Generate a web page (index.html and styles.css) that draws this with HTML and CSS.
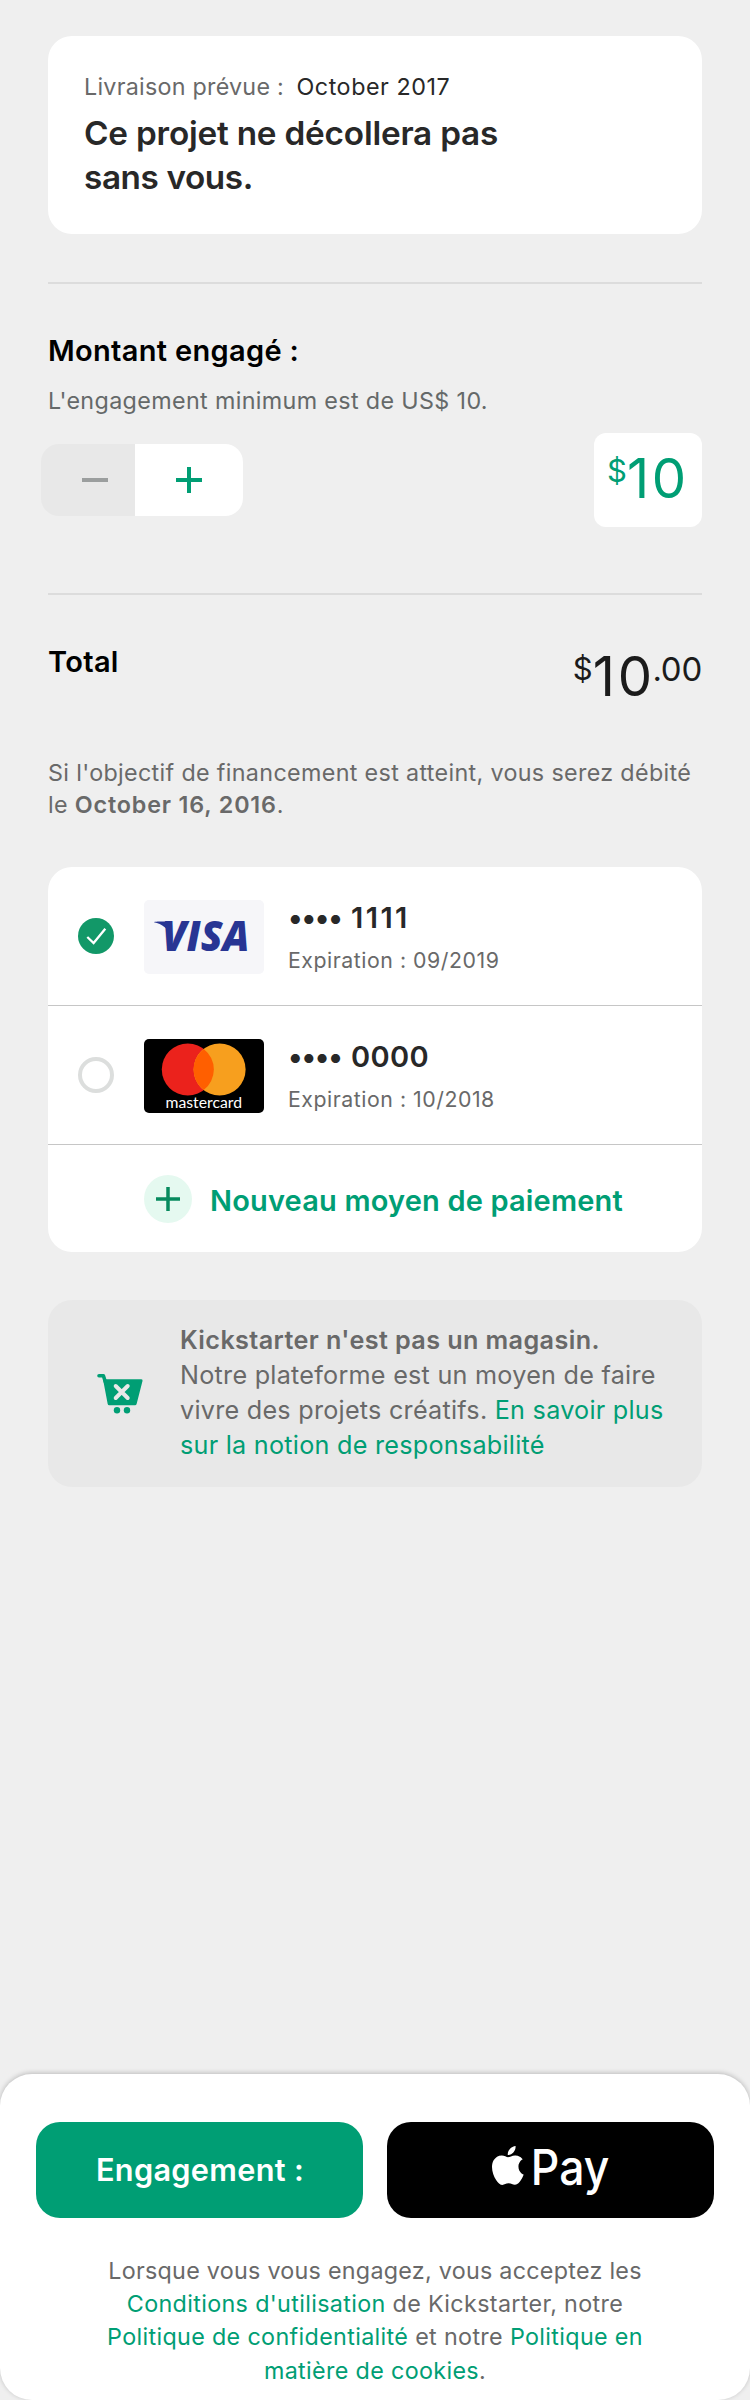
FILE: index.html
```html
<!DOCTYPE html>
<html lang="fr">
<head>
<meta charset="utf-8">
<title>Engagement</title>
<link rel="stylesheet" href="styles.css">
</head>
<body>
<main class="page">
  <div class="content">
    <section class="card reward">
      <p class="delivery"><span class="label">Livraison prévue :</span><span class="date">October 2017</span></p>
      <h1 class="reward-title">Ce projet ne décollera pas<br><span class="tight">sans vous.</span></h1>
    </section>

    <hr class="divider">

    <section class="pledge">
      <h2 class="heading">Montant engagé :</h2>
      <p class="minimum">L'engagement minimum est de US$ 10.</p>
      <div class="pledge-row">
        <div class="stepper">
          <button class="step minus" aria-label="Diminuer"><svg width="26" height="26" viewBox="0 0 26 26"><path d="M0 13H26" stroke="#9b9e9e" stroke-width="4"/></svg></button>
          <button class="step plus" aria-label="Augmenter"><svg width="26" height="26" viewBox="0 0 26 26"><path d="M0 13H26M13 0V26" stroke="#009e74" stroke-width="4"/></svg></button>
        </div>
        <div class="amount"><span class="currency">$</span><span class="units">10</span></div>
      </div>
    </section>

    <hr class="divider after-pledge">

    <section class="total">
      <h2 class="heading">Total</h2>
      <div class="price"><span class="currency">$</span><span class="units">10</span><span class="cents">.00</span></div>
    </section>

    <p class="notice">Si l'objectif de financement est atteint, vous serez débité<br>le <b>October 16, 2016</b>.</p>

    <section class="card methods">
      <div class="method">
        <svg class="radio" width="36" height="36" viewBox="0 0 36 36"><circle cx="18" cy="18" r="18" fill="#129868"/><path d="M9.3 19L15.6 25L27.3 10.8" fill="none" stroke="#fff" stroke-width="2.3"/></svg>
        <svg class="brand" width="120" height="74" viewBox="0 0 120 74">
          <rect width="120" height="74" rx="5" fill="#f6f6f9"/>
          <path d="M10 22.3C10 21.5 17 21.4 23.5 21.6L28.5 38C24.5 28.5 18 24 10 22.3Z" fill="#283593"/>
          <text class="visa" x="18" y="51.4" textLength="87.5" lengthAdjust="spacingAndGlyphs">VISA</text>
        </svg>
        <div class="details">
          <p class="number"><span class="dots">••••</span><span class="ones">1111</span></p>
          <p class="expiry">Expiration : 09/2019</p>
        </div>
      </div>
      <div class="method">
        <svg class="radio" width="36" height="36" viewBox="0 0 36 36"><circle cx="18" cy="18" r="16" fill="#fff" stroke="#dcdedd" stroke-width="4"/></svg>
        <svg class="brand" width="120" height="74" viewBox="0 0 120 74">
          <rect width="120" height="74" rx="5" fill="#000"/>
          <circle cx="43.8" cy="30.5" r="26" fill="#eb221c"/>
          <circle cx="75.6" cy="30.5" r="26" fill="#f79f1e"/>
          <path d="M59.7 9.9A26 26 0 0 1 59.7 51.1A26 26 0 0 1 59.7 9.9Z" fill="#ff5f00"/>
          <text class="mastercard" x="21.5" y="69.4" textLength="76.5" lengthAdjust="spacingAndGlyphs">mastercard</text>
        </svg>
        <div class="details">
          <p class="number"><span class="dots">••••</span><span>0000</span></p>
          <p class="expiry">Expiration : 10/2018</p>
        </div>
      </div>
      <a class="add">
        <svg width="48" height="48" viewBox="0 0 48 48"><circle cx="24" cy="24" r="24" fill="#e5f9f0"/><path d="M12 24H36M24 12V36" stroke="#078a5e" stroke-width="3.5"/></svg>
        <span class="add-label">Nouveau moyen de paiement</span>
      </a>
    </section>

    <section class="info">
      <svg class="cart" width="46" height="41" viewBox="0 0 46 41">
        <path d="M2 2.8H6.4L8.4 9" fill="none" stroke="#009e74" stroke-width="3.6" stroke-linecap="round" stroke-linejoin="round"/>
        <path d="M6 6.3H44.3Q46 6.3 45.5 8L39.6 31Q39.2 32.2 38 32.2H12.2Q11 32.2 10.7 31Z" fill="#009e74"/>
        <path d="M18.7 13L30.7 25M30.7 13L18.7 25" stroke="#e8e8e8" stroke-width="4" stroke-linecap="round"/>
        <circle cx="20" cy="37.3" r="3.2" fill="#009e74"/><circle cx="30" cy="37.3" r="3.2" fill="#009e74"/>
      </svg>
      <p class="info-text"><b>Kickstarter n'est pas un magasin.</b><br>Notre plateforme est un moyen de faire<br>vivre des projets créatifs. <a>En savoir plus<br>sur la notion de responsabilité</a></p>
    </section>
  </div>

  <footer class="footer">
    <div class="actions">
      <button class="btn pledge-btn">Engagement :</button>
      <button class="btn apple-btn">
        <svg width="141" height="72" viewBox="0 0 141 72">
          <path transform="translate(8.4 12) scale(1.62)" fill="#fff" d="M12.152 6.896c-.948 0-2.415-1.078-3.96-1.04-2.04.027-3.91 1.183-4.961 3.014-2.117 3.675-.546 9.103 1.519 12.09 1.013 1.454 2.208 3.09 3.792 3.039 1.52-.065 2.09-.987 3.935-.987 1.831 0 2.35.987 3.96.948 1.637-.026 2.676-1.48 3.676-2.948 1.156-1.688 1.636-3.325 1.662-3.415-.039-.013-3.182-1.221-3.22-4.857-.026-3.04 2.48-4.494 2.597-4.559-1.429-2.09-3.623-2.324-4.39-2.376-2-.156-3.675 1.09-4.61 1.09zM15.53 3.83c.843-1.012 1.4-2.427 1.245-3.83-1.207.052-2.662.805-3.532 1.818-.78.896-1.454 2.338-1.273 3.714 1.338.104 2.715-.688 3.559-1.701"/>
          <text class="pay" x="50.8" y="50.6" textLength="78.5" lengthAdjust="spacingAndGlyphs">Pay</text>
        </svg>
      </button>
    </div>
    <p class="legal"><span class="first">Lorsque vous vous engagez, vous acceptez les</span><br><a>Conditions d'utilisation</a> de Kickstarter, notre<br><a>Politique de confidentialité</a> et notre <a>Politique en<br>matière de cookies</a>.</p>
  </footer>
</main>
</body>
</html>
```
FILE: styles.css
```css
* { box-sizing: border-box; }
body, p, h1, h2, hr { margin: 0; }
body {
  background: #efefef;
  font-family: Inter, "Liberation Sans", sans-serif;
  color: #282828;
}
svg { display: block; flex: none; }
button { border: 0; padding: 0; font-family: inherit; }
b { font-weight: 600; }
a { color: #009e74; }

.page {
  display: flex;
  flex-direction: column;
  width: 750px;
  height: 2400px;
}
.content { padding: 36px 48px 0; }
.card { background: #fff; border-radius: 24px; }

.reward { height: 198px; padding: 36px; }
.delivery { font-size: 23.3px; line-height: 29px; letter-spacing: .25px; }
.delivery .label { color: #696969; }
.delivery .date { margin-left: 12.5px; letter-spacing: .54px; }
.reward-title {
  margin-top: 10px;
  font-size: 33.3px;
  font-weight: 600;
  line-height: 44px;
  letter-spacing: -.2px;
}
.tight { letter-spacing: -.4px; }

.divider { height: 2px; margin: 48px 0; border: 0; background: #dcdcdc; }
.heading {
  padding-top: 1px;
  font-size: 29px;
  font-weight: 600;
  line-height: 36px;
  letter-spacing: .32px;
  color: #000;
}
.minimum {
  margin-top: 17px;
  font-size: 23.3px;
  line-height: 30px;
  letter-spacing: .36px;
  color: #656969;
}
.pledge-row {
  display: flex;
  align-items: center;
  justify-content: space-between;
  margin-top: 17px;
}
.stepper {
  display: flex;
  height: 72px;
  margin-left: -7px;
  border-radius: 18px;
  overflow: hidden;
}
.step { display: flex; align-items: center; }
.minus { width: 94px; padding-left: 41px; background: #e8e8e8; }
.plus { width: 108px; padding-left: 41px; background: #fff; }

.amount, .price { display: flex; align-items: flex-start; }
.amount {
  width: 108px;
  height: 94px;
  padding: 15px 0 0 13px;
  border-radius: 12px;
  background: #fff;
  color: #009e74;
}
.currency { margin-top: 3px; font-size: 31px; line-height: 40px; }
.units { font-size: 54.5px; line-height: 60px; letter-spacing: 2.8px; }
.cents { margin: 3px 0 0 -2.5px; font-size: 33px; line-height: 40px; letter-spacing: -.24px; }

.after-pledge { margin-top: 66px; }
.total { display: flex; justify-content: space-between; height: 63px; }
.price { margin-top: 3px; color: #1b1b1b; }

.notice {
  margin: 51px 0 46px;
  font-size: 23.3px;
  line-height: 32px;
  letter-spacing: .34px;
  color: #696969;
}
.notice b { letter-spacing: .84px; }

.methods { height: 385px; }
.method {
  display: flex;
  height: 139px;
  padding-left: 30px;
  border-bottom: 1px solid #c6c6c6;
}
.radio { margin-top: 51px; }
.brand { margin: 33px 24px 0 30px; }
.visa {
  font-family: "Open Sans", sans-serif;
  font-size: 42px;
  font-weight: 800;
  font-style: italic;
  fill: #283593;
}
.mastercard { font-family: Lato, sans-serif; font-size: 14.5px; fill: #fff; }
.details { padding-top: 33px; }
.number { display: flex; font-size: 29px; font-weight: 600; line-height: 36px; letter-spacing: .37px; }
.dots { margin-right: 9.5px; letter-spacing: -1.2px; }
.ones { letter-spacing: 2.4px; }
.expiry { margin-top: 10px; font-size: 21.3px; line-height: 28px; letter-spacing: .53px; color: #696969; }
.add { display: flex; align-items: center; gap: 18px; height: 107px; padding-left: 96px; }
.add-label { margin-top: 4px; font-size: 29px; font-weight: 600; line-height: 36px; letter-spacing: .17px; }

.info {
  display: flex;
  align-items: center;
  gap: 37px;
  height: 187px;
  margin-top: 48px;
  padding-left: 49px;
  border-radius: 24px;
  background: #e8e8e8;
}
.info-text {
  margin-bottom: 1px;
  font-size: 25.2px;
  line-height: 35px;
  letter-spacing: .25px;
  color: #696969;
}
.info-text b { letter-spacing: .39px; }

.footer {
  height: 326px;
  margin-top: auto;
  padding: 48px 36px 0;
  border-radius: 32px;
  background: #fff;
  box-shadow: 0 -1px 5px rgba(0, 0, 0, .22);
}
.actions { display: flex; gap: 24px; }
.btn {
  display: flex;
  align-items: center;
  justify-content: center;
  width: 327px;
  height: 96px;
  border-radius: 24px;
}
.pledge-btn {
  padding: 0 0 2px 1px;
  background: #009e74;
  color: #fff;
  font-size: 30.7px;
  font-weight: 600;
  letter-spacing: .3px;
}
.apple-btn { background: #000; }
.pay { font-size: 49px; font-weight: 500; fill: #fff; }
.legal {
  margin-top: 36px;
  font-size: 23.3px;
  line-height: 33.2px;
  letter-spacing: .35px;
  text-align: center;
  color: #696969;
}
.first { letter-spacing: .27px; }
```
